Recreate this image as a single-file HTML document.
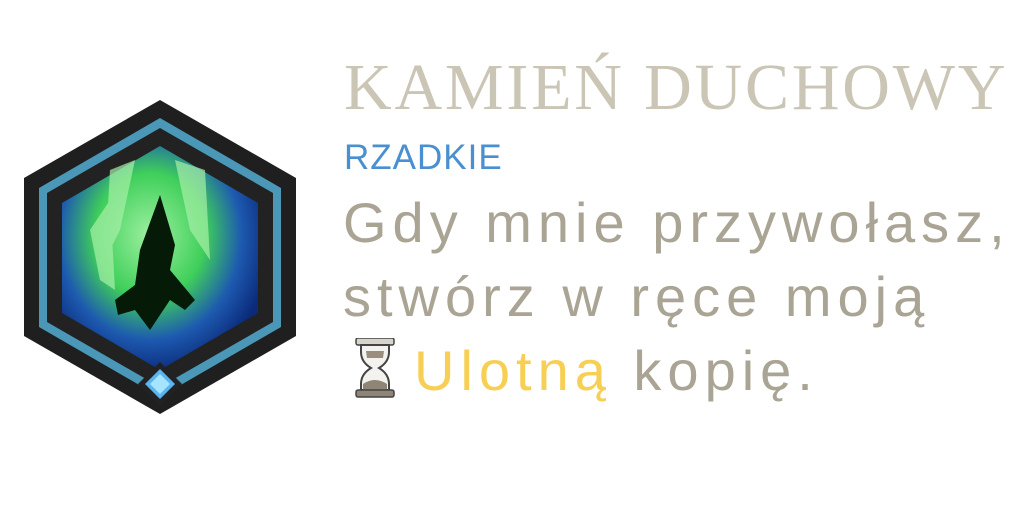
<!DOCTYPE html>
<html><head><meta charset="utf-8"><style>
html,body{margin:0;padding:0;width:1024px;height:512px;background:#fff;overflow:hidden}
.t{position:absolute;white-space:nowrap}
#title{left:344px;top:50px;font-family:"Liberation Serif",serif;font-size:66px;color:#cbc5b5;letter-spacing:2.8px;line-height:76px}
#rar{left:344px;top:136px;font-family:"Liberation Sans",sans-serif;font-size:35px;color:#4a8fd0;letter-spacing:1px;line-height:44px}
.b{left:343px;font-family:"Liberation Sans",sans-serif;font-size:56px;color:#aaa495;letter-spacing:6px;line-height:70px}
</style></head><body>
<svg width="330" height="430" style="position:absolute;left:0;top:90px" viewBox="0 90 330 430">
<defs>
<radialGradient id="g" cx="0.45" cy="0.4" r="0.62">
<stop offset="0" stop-color="#9ef0a0"/><stop offset="0.45" stop-color="#3fcf5a"/><stop offset="0.75" stop-color="#1d5ab0"/><stop offset="1" stop-color="#0b2a7a"/></radialGradient>
</defs>
<polygon points="160,100 296,178 296,336 160,414 24,336 24,178" fill="#1f1f1f"/>
<polygon points="160,118 281,188 281,327 160,397 39,327 39,188" fill="#4a97b8"/>
<polygon points="160,128 273,193 273,322 160,387 47,322 47,193" fill="#222"/>
<polygon points="160,146 258,203 258,313 160,370 62,313 62,203" fill="url(#g)"/>
<path d="M110,170 L135,160 L120,230 L105,260Z M175,160 L205,170 L210,260 L190,230Z M90,230 L110,200 L115,290 L100,280Z" fill="#a8f0a8" opacity="0.7"/>
<path d="M160,195 L175,245 L170,270 L195,300 L185,310 L170,300 L150,330 L135,310 L118,315 L115,300 L135,285 L140,250Z" fill="#061a08"/>
<polygon points="160,362 182,384 160,406 138,384" fill="#222"/>
<polygon points="160,369 175,384 160,399 145,384" fill="#5ab4f0"/>
<polygon points="160,374 170,384 160,394 150,384" fill="#a6e4ff"/>
</svg>
<div class="t" id="title">KAMIEŃ DUCHOWY</div>
<div class="t" id="rar">RZADKIE</div>
<div class="t b" style="top:188px">Gdy mnie przywołasz,</div>
<div class="t b" style="top:262px">stwórz w ręce moją</div>
<svg width="40" height="60" style="position:absolute;left:355px;top:338px" viewBox="0 0 40 60">
<rect x="1" y="0" width="38" height="7" rx="2" fill="#d8d4cc" stroke="#444" stroke-width="1.5"/>
<path d="M6,7 L34,7 L34,14 Q34,24 24,30 Q34,36 34,46 L34,52 L6,52 L6,46 Q6,36 16,30 Q6,24 6,14Z" fill="#f4f2ee" stroke="#444" stroke-width="2"/>
<path d="M11,13 L29,13 L28,20 L12,20Z" fill="#9a8f7e"/>
<path d="M8,52 L8,46 Q20,38 32,46 L32,52Z" fill="#8f8574"/>
<rect x="1" y="52" width="38" height="7" rx="2" fill="#8f8574" stroke="#444" stroke-width="1.5"/>
</svg>
<div class="t b" style="top:336px;left:414px"><span style="color:#f8cf55">Ulotną</span> kopię.</div>
</body></html>
